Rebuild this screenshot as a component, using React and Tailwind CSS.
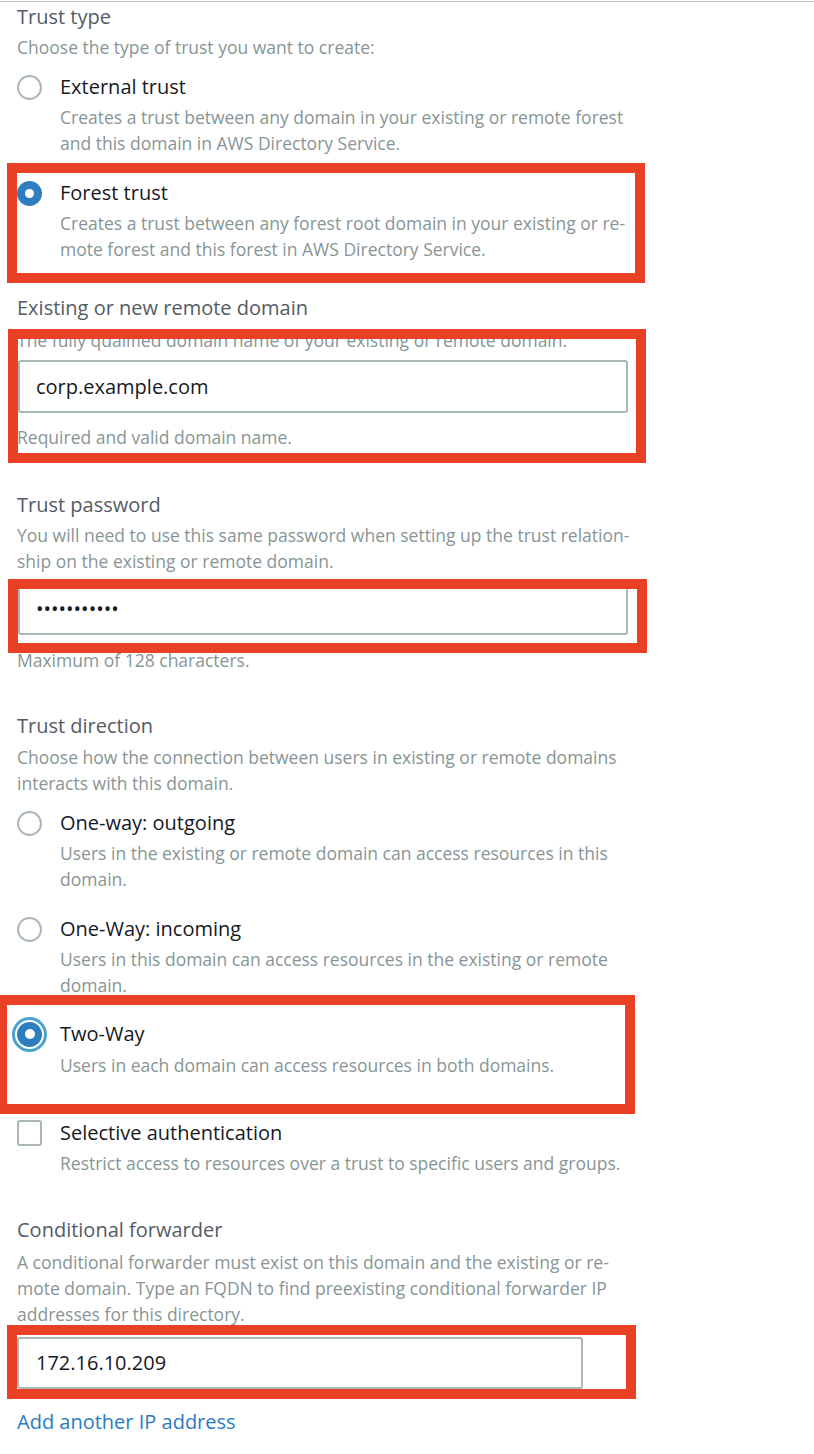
import React from "react";

const H = "text-[20px] leading-[28px] text-[#545b64]";
const D = "text-[17.5px] leading-[26px] text-[#879596] whitespace-nowrap";
const L = "text-[20px] leading-[26px] text-[#16191f] whitespace-nowrap";

function Radio({ state }) {
  if (state === "off") {
    return (
      <div className="w-[25px] h-[25px] rounded-full border-2 border-[#aab7b8] bg-white" />
    );
  }
  if (state === "focus") {
    return (
      <div className="w-[25px] h-[25px] rounded-full bg-[#2d7dbf] flex items-center justify-center shadow-[0_0_0_2px_#ffffff,0_0_0_5px_#4aa3cf]">
        <div className="w-[10px] h-[10px] rounded-full bg-white" />
      </div>
    );
  }
  return (
    <div className="w-[25px] h-[25px] rounded-full bg-[#2d7dbf] flex items-center justify-center">
      <div className="w-[9px] h-[9px] rounded-full bg-white" />
    </div>
  );
}

function Checkbox() {
  return <div className="w-[25px] h-[26px] rounded-[3px] border-2 border-[#aab7b8] bg-white" />;
}

function Option({ className, control, label, lines, descGap }) {
  return (
    <div className={"flex " + className}>
      <div className="w-[43px] h-[26px] flex items-center shrink-0">{control}</div>
      <div className="flex flex-col">
        <div className={L}>{label}</div>
        <div className={D + " " + descGap}>
          {lines.map((l, i) => (
            <div key={i}>{l}</div>
          ))}
        </div>
      </div>
    </div>
  );
}

function RedBox({ className }) {
  return (
    <div
      className={
        "absolute border-[10px] border-[#ea4026] pointer-events-none " + className
      }
    />
  );
}

export default function App() {
  return (
    <div className="relative w-[814px] h-[1454px] bg-white overflow-hidden font-['Open_Sans',sans-serif]">
      <div className="h-px mt-px bg-[#c4c4c4]" />
      <div className="pl-[17px] flex flex-col items-start">
        <div className={H + " mt-[1px]"}>Trust type</div>
        <div className={D + " mt-[3px]"}>Choose the type of trust you want to create:</div>

        <Option
          className="mt-[14px]"
          descGap="mt-[4px]"
          control={<Radio state="off" />}
          label="External trust"
          lines={[
            "Creates a trust between any domain in your existing or remote forest",
            "and this domain in AWS Directory Service.",
          ]}
        />
        <Option
          className="mt-[24px]"
          descGap="mt-[4px]"
          control={<Radio state="on" />}
          label="Forest trust"
          lines={[
            "Creates a trust between any forest root domain in your existing or re-",
            "mote forest and this forest in AWS Directory Service.",
          ]}
        />

        <div className={H + " mt-[32px]"}>Existing or new remote domain</div>
        <div className={D + " mt-[5px]"}>
          The fully qualified domain name of your existing or remote domain.
        </div>
        <div className="mt-[7px] ml-px w-[610px] h-[53px] border-2 border-[#aab7b8] rounded-[3px] pl-[16px] flex items-center text-[20px] text-[#16191f]">
          corp.example.com
        </div>
        <div className={D + " mt-[11px]"}>Required and valid domain name.</div>

        <div className={H + " mt-[41px]"}>Trust password</div>
        <div className={D + " mt-[3px]"}>
          <div>You will need to use this same password when setting up the trust relation-</div>
          <div>ship on the existing or remote domain.</div>
        </div>
        <div className="mt-[8px] ml-px w-[610px] h-[53px] border-2 border-[#aab7b8] rounded-[3px] pl-[16px] flex items-center text-[20px] text-[#16191f]">
          •••••••••••
        </div>
        <div className={D + " mt-[12px]"}>Maximum of 128 characters.</div>

        <div className={H + " mt-[39px]"}>Trust direction</div>
        <div className={D + " mt-[4px]"}>
          <div>Choose how the connection between users in existing or remote domains</div>
          <div>interacts with this domain.</div>
        </div>

        <Option
          className="mt-[14px]"
          descGap="mt-[4px]"
          control={<Radio state="off" />}
          label="One-way: outgoing"
          lines={[
            "Users in the existing or remote domain can access resources in this",
            "domain.",
          ]}
        />
        <Option
          className="mt-[24px]"
          descGap="mt-[4px]"
          control={<Radio state="off" />}
          label="One-Way: incoming"
          lines={[
            "Users in this domain can access resources in the existing or remote",
            "domain.",
          ]}
        />
        <Option
          className="mt-[23px]"
          descGap="mt-[5px]"
          control={<Radio state="focus" />}
          label="Two-Way"
          lines={["Users in each domain can access resources in both domains."]}
        />
        <Option
          className="mt-[42px]"
          descGap="mt-[4px]"
          control={<Checkbox />}
          label="Selective authentication"
          lines={["Restrict access to resources over a trust to specific users and groups."]}
        />

        <div className={H + " mt-[40px]"}>Conditional forwarder</div>
        <div className={D + " mt-[5px]"}>
          <div>A conditional forwarder must exist on this domain and the existing or re-</div>
          <div>mote domain. Type an FQDN to find preexisting conditional forwarder IP</div>
          <div>addresses for this directory.</div>
        </div>
        <div className="mt-[10px] w-[566px] h-[52px] border-2 border-[#aab7b8] rounded-[3px] pl-[17px] flex items-center text-[20px] text-[#16191f]">
          172.16.10.209
        </div>
        <div className="mt-[20px] text-[20px] leading-[26px] text-[#2a7bbf]">
          Add another IP address
        </div>
      </div>

      <RedBox className="left-[7px] top-[163px] w-[638px] h-[120px]" />
      <RedBox className="left-[8px] top-[329px] w-[638px] h-[134px]" />
      <RedBox className="left-[8px] top-[579px] w-[639px] h-[74px]" />
      <RedBox className="left-[-3px] top-[995px] w-[638px] h-[119px]" />
      <RedBox className="left-[7px] top-[1325px] w-[629px] h-[74px]" />
    </div>
  );
}
